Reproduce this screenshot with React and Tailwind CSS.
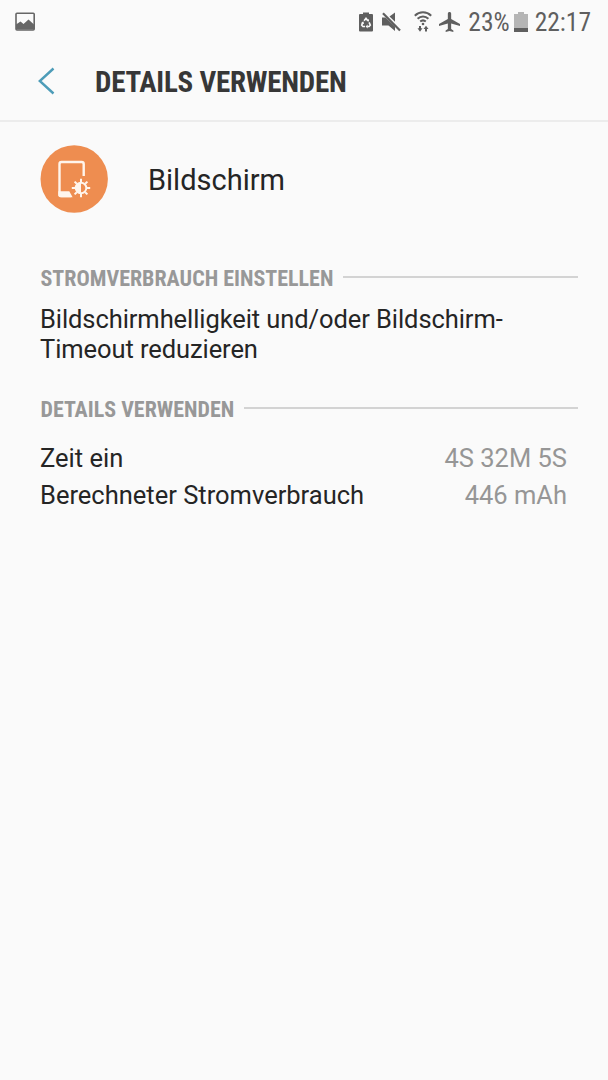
import React from 'react';

const usage = [
  { label: 'Zeit ein', value: '4S 32M 5S' },
  { label: 'Berechneter Stromverbrauch', value: '446 mAh' },
];

const PictureIcon = () => (
  <svg className="w-[22px] h-5" viewBox="0 0 22 20" fill="none">
    <rect x="2" y="1.200" width="18.200" height="16.800" rx="1" stroke="#666" strokeWidth="1.600" />
    <path d="M2 12.500 6.500 9.500l3 2.500 5-4.500 5.500 5v5H2z" fill="#666" />
  </svg>
);

const BatteryRecycleIcon = () => (
  <svg className="w-3.5 h-5" viewBox="0 0 14 20">
    <path d="M4 .5h6V2h3a1 1 0 0 1 1 1v15.500a1 1 0 0 1-1 1H1a1 1 0 0 1-1-1V3a1 1 0 0 1 1-1h3z" fill="#5f5f5f" />
    <path d="M5.100 8.700 7 6.200l1.900 2.500M10.100 10.400l1.200 2.800-1.200 1.300H8.200M6 14.500H3.900l-1.200-1.300 1.200-2.800" fill="none" stroke="#fafafa" strokeWidth="1.600" />
    <path d="m7.400 9 2.600.5-.1-2.600zM8.600 12.500v4l-2-2zM2 11.300l2.200-2 .9 2.600z" fill="#fafafa" />
  </svg>
);

const MuteIcon = () => (
  <svg className="w-[19px] h-5" viewBox="0 0 19 20">
    <path d="M0 5.500h3.500L13 14.500V19l-6.500-5.500H0zM7.500 4.500 13 .5v9.300z" fill="#5f5f5f" />
    <path d="M1 1.200 18 18.600" stroke="#5f5f5f" strokeWidth="2.200" />
  </svg>
);

const WifiIcon = () => (
  <svg className="w-[18px] h-[21px]" viewBox="0 0 18 21" fill="none" stroke="#5f5f5f" strokeWidth="2">
    <path d="M.8 4.700C5.500.2 12.500.2 17.200 4.700M3.600 7.800c3.100-3 7.700-3 10.800 0M6.200 10.600c1.700-1.500 3.900-1.500 5.600 0" />
    <circle cx="9" cy="13" r="1.300" fill="#5f5f5f" stroke="none" />
    <path d="M6 15v4M12 20.500v-4" />
    <path d="M3.500 17.300H8.500L6 20.800zM9.500 18h5L12 14.700z" fill="#5f5f5f" stroke="none" />
  </svg>
);

const PlaneIcon = () => (
  <svg className="w-[21px] h-5" viewBox="2 2 19 20" preserveAspectRatio="none">
    <path
      d="M21 16v-2l-8-5V3.500c0-.83-.67-1.500-1.500-1.500S10 2.670 10 3.500V9l-8 5v2l8-2.500V19l-2 1.500V22l3.500-1 3.500 1v-1.500L13 19v-5.500l8 2.500z"
      fill="#5f5f5f"
    />
  </svg>
);

const BatteryIcon = () => (
  <svg className="w-3.5 h-5" viewBox="0 0 14 20">
    <path d="M4 0h6v2h4v14H0V2h4z" fill="#b5b5b5" />
    <path d="M0 16h14v4H0z" fill="#5f5f5f" />
  </svg>
);

const ScreenIcon = () => (
  <svg className="w-[68px] h-[68px]" viewBox="0 0 68 68" fill="none">
    <circle cx="34.200" cy="34" r="33.700" fill="#ee8d50" />
    <path d="M43.700 31V19a2 2 0 0 0-2-2H21.500a2 2 0 0 0-2 2v30a2 2 0 0 0 2 2H31" stroke="#fff5ec" strokeWidth="2.400" />
    <path d="M18.300 46.300h11l3.300 5.900H20.300a2 2 0 0 1-2-2z" fill="#fff5ec" />
    <g transform="translate(41 43)">
      <circle r="5.300" stroke="#fff5ec" strokeWidth="1.900" />
      <path d="M0-5.500A5.500 5.500 0 0 0 0 5.500z" fill="#fff5ec" />
      <path
        d="M0-6v-3.200M0 6v3.200M-6 0h-3.200M6 0h3.200M-4.200-4.200l-2.200-2.200M4.200 4.200l2.200 2.200M-4.200 4.200l-2.200 2.200M4.200-4.200l2.200-2.200"
        stroke="#fff5ec"
        strokeWidth="2"
      />
    </g>
  </svg>
);

const SectionTitle = ({ children }) => (
  <div className="flex items-center pl-[40.500px] pr-[30px] h-6">
    <h2 className="pt-[3px] font-['Roboto_Condensed',Roboto,sans-serif] [font-stretch:75%] text-[22px] leading-6 font-bold text-[#989898] whitespace-nowrap">
      {children}
    </h2>
    <div className="ml-2.5 flex-1 h-0.5 bg-[#d3d3d3]" />
  </div>
);

const App = () => {
  return (
    <div className="min-h-screen w-full bg-[#fafafa] font-[Roboto,sans-serif] text-[#252525]">
      <div className="flex items-center justify-between h-[43px] pl-3.5 pr-[17px]">
        <PictureIcon />
        <div className="flex items-center text-[#5f5f5f]">
          <BatteryRecycleIcon />
          <div className="ml-[9px]"><MuteIcon /></div>
          <div className="ml-[13px]"><WifiIcon /></div>
          <div className="ml-[7px]"><PlaneIcon /></div>
          <span className="ml-2 pt-0.5 font-['Roboto_Condensed',Roboto,sans-serif] [font-stretch:75%] text-[25.500px] leading-none">23%</span>
          <div className="ml-1"><BatteryIcon /></div>
          <span className="ml-[7px] pt-0.5 font-['Roboto_Condensed',Roboto,sans-serif] [font-stretch:75%] text-[25.500px] leading-none">22:17</span>
        </div>
      </div>

      <header className="flex items-center h-[79px] pl-[38px] border-b-2 border-[#ececec]">
        <svg className="w-[17px] h-7 -mt-0.5" viewBox="0 0 17 28" fill="none">
          <path d="M15.500 1.500 1.800 14l13.700 12.500" stroke="#4d9cb8" strokeWidth="2.400" />
        </svg>
        <h1 className="ml-10 font-['Roboto_Condensed',Roboto,sans-serif] [font-stretch:75%] text-[29px] leading-8 font-bold tracking-[-0.23px] text-[#373737] whitespace-nowrap">
          DETAILS VERWENDEN
        </h1>
      </header>

      <main>
        <div className="flex items-center pt-[23px] pl-10">
          <ScreenIcon />
          <span className="ml-10 pt-0.5 text-[29px] leading-9">Bildschirm</span>
        </div>

        <div className="mt-[52px]">
          <SectionTitle>STROMVERBRAUCH EINSTELLEN</SectionTitle>
          <p className="mt-4 pl-10 text-[25.500px] leading-[29.500px] tracking-[-0.08px]">
            Bildschirmhelligkeit und/oder Bildschirm-
            <br />
            Timeout reduzieren
          </p>
        </div>

        <div className="mt-8">
          <SectionTitle>DETAILS VERWENDEN</SectionTitle>
          <div className="mt-5 pl-10 pr-[41px]">
            {usage.map((row) => (
              <div key={row.label} className="flex justify-between text-[25.500px] leading-[37px]">
                <span>{row.label}</span>
                <span className="text-[#969696]">{row.value}</span>
              </div>
            ))}
          </div>
        </div>
      </main>
    </div>
  );
};

export default App;
